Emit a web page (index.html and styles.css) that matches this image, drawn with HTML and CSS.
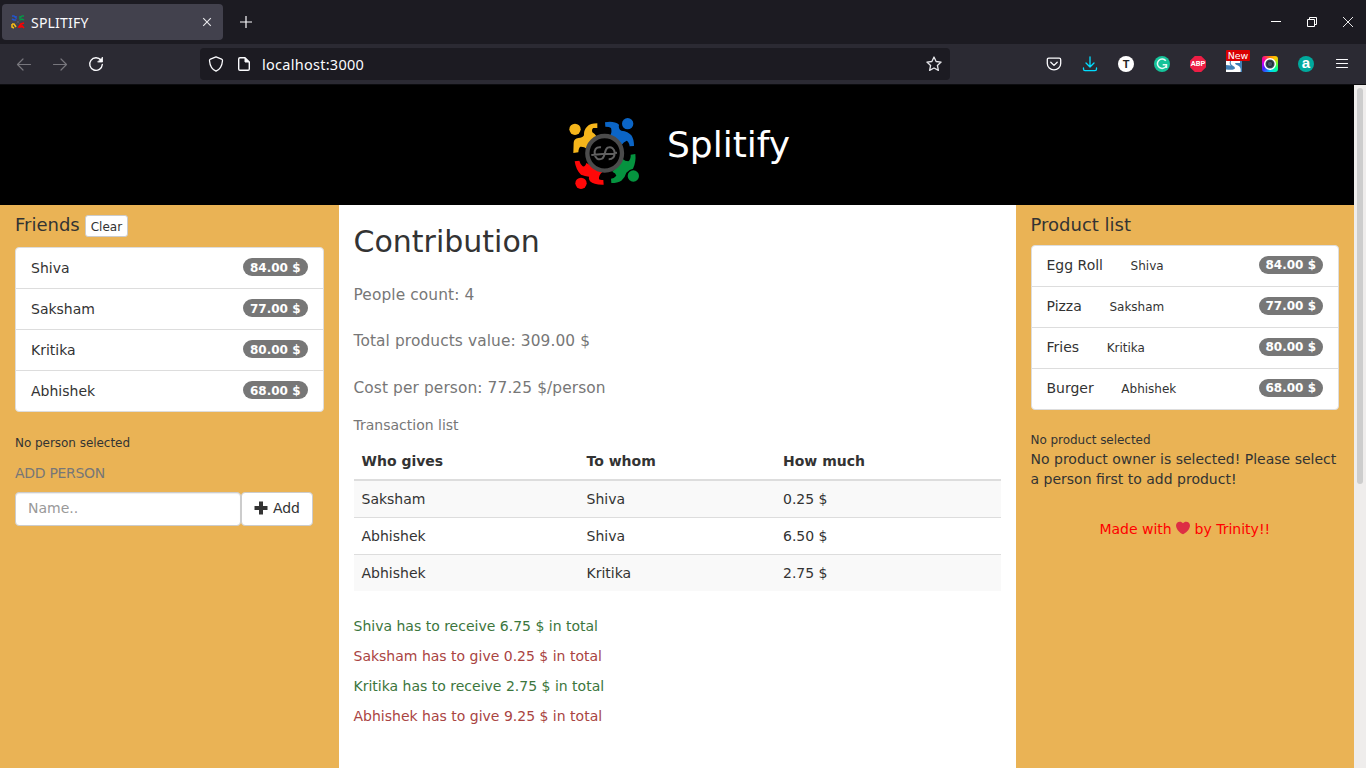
FILE: index.html
```html
<!DOCTYPE html>
<html lang="en">
<head>
<meta charset="utf-8">
<title>SPLITIFY</title>
<link rel="stylesheet" href="styles.css">
</head>
<body>
<div class="tabs">
  <div class="tab">
    <svg class="favicon" width="14" height="14" viewBox="0 0 14 14"><path d="M1 1h2l2 2V1M1 4l2 1h2" fill="none" stroke="#2354cc" stroke-width="1.500"/><path d="M13 1h-2L9 3V1M13 5l-2-1-2 1" fill="none" stroke="#089447" stroke-width="1.500"/><path d="M1 9l2 0 2 3M1 9v3l2 1" fill="none" stroke="#f3bb16" stroke-width="1.600"/><path d="M13 8l-3 1-2 3 2 0 1-1 2 2" fill="none" stroke="#f00" stroke-width="1.700"/><path d="M5.500 5.500l3 3M8.500 5.500l-3 3" stroke="#55545f"/></svg>
    <span class="tab-title">SPLITIFY</span>
    <svg width="10" height="10" viewBox="0 0 10 10" fill="none" stroke="#e8e8ec" stroke-width="1.1"><path d="M1.2 1.2l7.6 7.6M8.8 1.2L1.2 8.8"/></svg>
  </div>
  <svg class="newtab" width="12" height="12" viewBox="0 0 12 12" stroke="#fbfbfe" stroke-width="1.2"><path d="M6 0v12M0 6h12"/></svg>
  <div class="winbtns">
    <svg width="10" height="10" viewBox="0 0 10 10" stroke="#fff"><path d="M0 4.5h10"/></svg>
    <svg width="10" height="10" viewBox="0 0 10 10" stroke="#fff" fill="none"><path d="M.5 2.5h7v7h-7zM2.5 2.5v-2h7v7h-2"/></svg>
    <svg width="10" height="10" viewBox="0 0 10 10" stroke="#fff" stroke-width=".9"><path d="M0 0l10 10M10 0L0 10"/></svg>
  </div>
</div>
<div class="toolbar">
  <div class="nav">
    <svg width="16" height="16" viewBox="0 0 16 16" fill="none" stroke="#77767d" stroke-width="1.2" stroke-linecap="round" stroke-linejoin="round"><path d="M14.500 8.500H1.500M7 3L1.500 8.500 7 14"/></svg>
    <svg width="16" height="16" viewBox="0 0 16 16" fill="none" stroke="#77767d" stroke-width="1.2" stroke-linecap="round" stroke-linejoin="round"><path d="M1.500 8.500h13M9 3l5.500 5.500L9 14"/></svg>
    <svg width="16" height="16" viewBox="0 0 16 16" fill="none" stroke="#fbfbfe" stroke-width="1.4" stroke-linecap="round"><path d="M13 4.200A6.300 6.300 0 1 0 14.300 8.500"/><path d="M14.500 1.500v4.500H10z" fill="#fbfbfe" stroke-width=".8" stroke-linejoin="round"/></svg>
  </div>
  <div class="urlbar">
    <svg width="16" height="16" viewBox="0 0 16 16" fill="none" stroke="#fbfbfe" stroke-width="1.300" stroke-linejoin="round"><path d="M8 .8l5.600 2.400c.9.4 1 .8.900 1.500C14.100 9.600 12.200 13.300 8 15.200 3.800 13.300 1.900 9.600 1.500 4.700c-.1-.7 0-1.100.9-1.500z"/></svg>
    <svg class="doc" width="16" height="16" viewBox="0 0 16 16" fill="none" stroke="#fbfbfe" stroke-width="1.400" stroke-linejoin="round"><path d="M4 1.700h5l4.300 4.300v7q0 1.300-1.300 1.300H4q-1.300 0-1.300-1.300V3q0-1.300 1.300-1.300z"/><path d="M9 2v4h4z" fill="#fbfbfe" stroke-width="1"/></svg>
    <span class="url">localhost:3000</span>
    <svg width="16" height="16" viewBox="0 0 16 16" fill="none" stroke="#e6e6ea" stroke-width="1.300" stroke-linejoin="round"><path d="M8 1l2.100 4.500 5 .6-3.700 3.400 1 4.900L8 12l-4.400 2.400 1-4.900L.9 6.100l5-.6z"/></svg>
  </div>
  <div class="extensions">
    <svg width="16" height="16" viewBox="0 0 16 16" fill="none" stroke="#fbfbfe" stroke-width="1.300" stroke-linecap="round" stroke-linejoin="round"><path d="M2.800 2.200h10.400q1.500 0 1.500 1.500V7.500a6.700 6.300 0 0 1-13.400 0V3.700q0-1.500 1.500-1.500z"/><path d="M4.800 6.300L8 9.400l3.200-3.100"/></svg>
    <svg width="16" height="16" viewBox="0 0 16 16" fill="none" stroke="#00ddff" stroke-width="1.300" stroke-linecap="round" stroke-linejoin="round"><path d="M8 .8V11M4 7l4 4 4-4M1.500 12v1q0 1.700 1.500 1.700h10q1.500 0 1.500-1.700v-1"/></svg>
    <span class="ext ext-t">T</span>
    <svg width="16" height="16" viewBox="0 0 16 16"><circle cx="8" cy="8" r="8" fill="#15c39a"/><path d="M11.800 4.800A4.700 4.700 0 1 0 12.200 10M8.700 8.700h3.800v3.200" fill="none" stroke="#e5faf4" stroke-width="1.500"/></svg>
    <span class="ext ext-abp">ABP</span>
    <span class="ext ext-s"><svg width="16" height="16" viewBox="0 0 16 16"><path fill="#3f7fb5" d="M0 0h16v16H0z"/><path d="M5 5h9v2H9q0 1.500 3 2.500 3.500 1.500 2.500 6.500H0v-2.500q9 1 9-1.500 0-1.500-2.500-2.500Q4 8 5 5z" fill="#fff"/><path d="M0 5h4q-1 3 1 4.500L0 9z" fill="#fff"/></svg><span class="new">New</span></span>
    <span class="ext ext-cam"><svg width="16" height="16" viewBox="0 0 16 16"><circle cx="8" cy="8" r="5.300" fill="#344652" stroke="#fff" stroke-width="1.500"/><circle cx="8" cy="8" r="2.700" fill="#425363" stroke="#202e3a"/></svg></span>
    <span class="ext ext-a">a</span>
    <svg width="16" height="16" viewBox="0 0 16 16" stroke="#fbfbfe" stroke-width="1.200" stroke-linecap="round"><path d="M2.500 3.500h11M2.500 7.500h11M2.500 11.500h11"/></svg>
  </div>
</div>
<div class="viewport">
  <div class="page">
    <header class="header">
      <svg class="logo" width="75" height="75" viewBox="51 30 225 225">
        <g fill="#f5b51b"><circle cx="75" cy="73" r="17"/><path d="M70 144L71 113Q72 101 85 99Q97 99 102 91Q101 75 111 65Q121 55 142 55V69H130Q124 73 127 82Q136 87 143 98L112 132Q101 124 91 125Q86 128 85 142z"/></g>
        <g fill="#0b65c6"><circle cx="233" cy="56" r="17"/><path d="M165 52Q192 47 207 59Q204 71 214 77Q235 79 244 91Q252 102 252 123L239 124Q237 110 230 107Q221 110 214 121L180 92Q187 82 183 69Q179 65 166 65z"/></g>
        <g fill="#ff0808"><circle cx="93" cy="235" r="17"/><path d="M74 169L88 167Q91 178 98 184Q106 186 109 174L158 200Q145 211 147 223Q151 226 160 225L161 239Q132 240 120 229Q115 221 117 215Q105 213 93 209Q78 196 74 169z"/></g>
        <g fill="#05933f"><circle cx="250" cy="213" r="17"/><path d="M256 147Q259 170 249 191Q239 193 229 203Q225 218 214 227Q203 234 184 234L183 221Q193 220 199 212Q198 205 187 200L218 162Q225 169 235 169Q243 162 242 149z"/></g>
        <circle cx="164" cy="145" r="52" fill="#000" stroke="#4b4b4b" stroke-width="13"/>
        <path d="M124 150L201 143M153 127C137 125 133 135 134 147C135 160 145 166 156 161C166 156 163 133 173 128C184 123 194 132 194 144C194 156 189 163 176 163" fill="none" stroke="#606060" stroke-width="6"/>
      </svg>
      <h1 class="brand">Splitify</h1>
    </header>
    <main class="columns">
      <aside class="side friends">
        <div class="side-head"><h4>Friends</h4><button class="btn btn-xs">Clear</button></div>
        <ul class="list">
          <li><span>Shiva</span><b class="badge">84.00 $</b></li>
          <li><span>Saksham</span><b class="badge">77.00 $</b></li>
          <li><span>Kritika</span><b class="badge">80.00 $</b></li>
          <li><span>Abhishek</span><b class="badge">68.00 $</b></li>
        </ul>
        <p class="small">No person selected</p>
        <p class="add-label">ADD PERSON</p>
        <div class="add-form"><input class="field" type="text" placeholder="Name.."><button class="btn"><svg width="14" height="14" viewBox="0 0 14 14"><path d="M5 .5h4v4.500h4.500v4H9v4.500H5V9H.5V5H5z" fill="#333"/></svg>Add</button></div>
      </aside>
      <section class="content">
        <h2>Contribution</h2>
        <p class="stat">People count: 4</p>
        <p class="stat">Total products value: 309.00 $</p>
        <p class="stat">Cost per person: 77.25 $/person</p>
        <p class="caption">Transaction list</p>
        <table class="table">
          <thead><tr><th class="c1">Who gives</th><th class="c2">To whom</th><th>How much</th></tr></thead>
          <tbody>
            <tr><td>Saksham</td><td>Shiva</td><td>0.25 $</td></tr>
            <tr><td>Abhishek</td><td>Shiva</td><td>6.50 $</td></tr>
            <tr><td>Abhishek</td><td>Kritika</td><td>2.75 $</td></tr>
          </tbody>
        </table>
        <p class="total receive">Shiva has to receive 6.75 $ in total</p>
        <p class="total give">Saksham has to give 0.25 $ in total</p>
        <p class="total receive">Kritika has to receive 2.75 $ in total</p>
        <p class="total give">Abhishek has to give 9.25 $ in total</p>
      </section>
      <aside class="side products">
        <div class="side-head products-head"><h4>Product list</h4></div>
        <ul class="list">
          <li><span>Egg Roll</span><span class="owner">Shiva</span><b class="badge">84.00 $</b></li>
          <li><span>Pizza</span><span class="owner">Saksham</span><b class="badge">77.00 $</b></li>
          <li><span>Fries</span><span class="owner">Kritika</span><b class="badge">80.00 $</b></li>
          <li><span>Burger</span><span class="owner">Abhishek</span><b class="badge">68.00 $</b></li>
        </ul>
        <p class="small">No product selected</p>
        <p class="hint">No product owner is selected! Please select a person first to add product!</p>
        <p class="credit">Made with <svg width="14" height="14" viewBox="0 0 36 36"><path fill="#dd2e44" d="M35.900 11.800c0-5.500-4.400-9.900-9.900-9.900-3.300 0-6.200 1.600-8 4.100-1.800-2.500-4.700-4.100-8-4.100-5.500 0-9.900 4.400-9.900 9.900 0 .8.100 1.500.3 2.200C1.700 22.600 11.200 31.600 18 34.100c6.800-2.500 16.300-11.500 17.600-20 .2-.8.300-1.500.3-2.300z"/></svg> by Trinity!!</p>
      </aside>
    </main>
  </div>
  <div class="scrollbar"><div class="thumb"></div></div>
</div>
</body>
</html>
```
FILE: styles.css
```css
* { box-sizing: border-box; }
body { margin: 0; width: 1366px; height: 768px; overflow: hidden; display: flex; flex-direction: column; font: 14px/20px "DejaVu Sans", sans-serif; color: #333; background: #000; }
h1, h2, h4, p, ul { margin: 0; padding: 0; font-weight: 400; }
svg { flex: none; }

.tabs { height: 44px; background: #1c1b22; display: flex; align-items: center; padding-left: 2px; }
.tab { width: 221px; height: 36px; border-radius: 4px; background: #42414d; display: flex; align-items: center; padding: 0 11px 0 9px; }
.tab-title { flex: 1; margin-left: 6px; padding-top: 1px; color: #fbfbfe; font: 14px/20px "Noto Sans", sans-serif; letter-spacing: .2px; }
.newtab { margin-left: 17px; }
.winbtns { margin-left: auto; display: flex; gap: 26px; padding-right: 13px; }

.toolbar { height: 41px; background: #2b2a33; border-bottom: 1px solid #0c0c0f; display: flex; align-items: center; }
.nav { width: 200px; padding-left: 16px; display: flex; gap: 20px; }
.urlbar { width: 750px; height: 32px; border-radius: 4px; background: #1c1b22; display: flex; align-items: center; padding: 0 8px; }
.doc { margin-left: 12px; }
.url { flex: 1; margin-left: 10px; padding-bottom: 1px; color: #fbfbfe; font: 14.500px/20px "Noto Sans", sans-serif; letter-spacing: .27px; }
.extensions { margin-left: auto; padding-right: 16px; display: flex; align-items: center; gap: 20px; }
.ext { width: 16px; height: 16px; display: flex; align-items: center; justify-content: center; position: relative; font-family: "Liberation Sans", sans-serif; font-weight: 700; line-height: 16px; color: #fff; }
.ext-t { background: #fff; color: #222; border-radius: 50%; font-size: 11px; }
.ext-abp { background: #ed1e45; font-family: Roboto, sans-serif; font-size: 7.500px; clip-path: polygon(30% 0, 70% 0, 100% 30%, 100% 70%, 70% 100%, 30% 100%, 0 70%, 0 30%); }
.ext-cam { border-radius: 3px; background: conic-gradient(#f80, #fc0 12%, #6f3 25%, #0f9 35%, #0cf 50%, #42f 65%, #b0f 75%, #f09 85%, #f80); }
.ext-a { background: #00a99d; border-radius: 50%; font-size: 15px; line-height: 12px; padding-bottom: 2px; }
.new { position: absolute; left: 0; top: -6px; width: 24px; height: 11px; border-radius: 1px; background: #d90000; text-align: center; font: 9.500px/11px "DejaVu Sans", sans-serif; }

.viewport { flex: 1; display: flex; min-height: 0; }
.page { flex: 1; display: flex; flex-direction: column; }
.scrollbar { width: 12px; background: #efedec; padding: 3px; }
.thumb { width: 6px; height: 396px; border-radius: 3px; background: #cdcdcd; }
.header { height: 120px; background: #000; color: #fff; display: flex; align-items: flex-start; padding-left: 567px; }
.logo { margin-top: 30px; }
.brand { margin: 40px 0 0 25px; font-size: 36px; line-height: 40px; }
.columns { flex: 1; display: grid; grid-template-columns: 338.500px 677px 338.500px; background: #fff; min-height: 0; }
.side { background: #eab355; padding: 10px 15px 0; }
.side-head { display: flex; align-items: flex-start; gap: 5px; height: 32px; }
.products-head { height: 30px; }
h4 { font-size: 18px; line-height: 20px; }
.btn { border: 1px solid #ccc; border-radius: 4px; background: #fff; color: #333; font: 14px/20px "DejaVu Sans", sans-serif; padding: 5px 12px 7px; display: flex; align-items: center; gap: 5px; letter-spacing: -.1px; }
.btn-xs { font-size: 12px; line-height: 18px; height: 22px; padding: 2px 5px 0; border-radius: 3px; letter-spacing: 0; }
.list { list-style: none; background: #fff; border: 1px solid #ddd; border-radius: 4px; margin-bottom: 20px; }
.list li { height: 41px; display: flex; align-items: flex-start; padding: 10px 15px; border-bottom: 1px solid #ddd; }
.list li:last-child { height: 40px; border-bottom: 0; }
.badge { margin-left: auto; height: 18px; border-radius: 10px; background: #777; color: #fff; font-size: 12px; line-height: 12px; padding: 3px 7px; }
.friends .badge { padding-top: 4px; padding-bottom: 2px; }
.products .list li { padding-top: 9px; }
.products .badge { margin-top: 1px; }
.owner { font-size: 12px; margin-left: 27.600px; padding-top: 1px; }
.small { font-size: 12px; letter-spacing: -.04px; }
.friends .small { padding-top: 1px; }
.add-label { color: #777; margin: 10px 0 9px; letter-spacing: -.3px; }
.add-form { display: flex; }
.field { width: 226px; height: 34px; border: 1px solid #ccc; border-radius: 4px; padding: 5px 12px 7px; background: #fff; font: 14px/20px "DejaVu Sans", sans-serif; box-shadow: inset 0 1px 1px rgba(0,0,0,.075); }
.field::placeholder { color: #999; opacity: 1; }
.content { padding: 20px 15px 0; }
h2 { font-size: 30px; line-height: 33px; margin-bottom: 26.500px; }
.stat { font-size: 15.400px; line-height: 20px; margin-bottom: 26.500px; color: #777; letter-spacing: .1px; }
.caption { color: #777; margin: -9px 0 8px; }
.table { width: 100%; table-layout: fixed; border-collapse: collapse; margin-bottom: 25px; }
.table th, .table td { text-align: left; padding: 8px; line-height: 20px; }
.table th { border-bottom: 2px solid #ddd; }
.table td { border-top: 1px solid #ddd; }
.table tbody tr:nth-child(odd) { background: #f9f9f9; }
.c1 { width: 225px; }
.c2 { width: 196.500px; }
.total { margin-bottom: 10px; }
.receive { color: #3c763d; }
.give { color: #a94442; }
.hint { line-height: 20px; margin-top: -1px; }
.credit { margin-top: 30px; text-align: center; color: #f00; }
.credit svg { vertical-align: -1px; }
```
